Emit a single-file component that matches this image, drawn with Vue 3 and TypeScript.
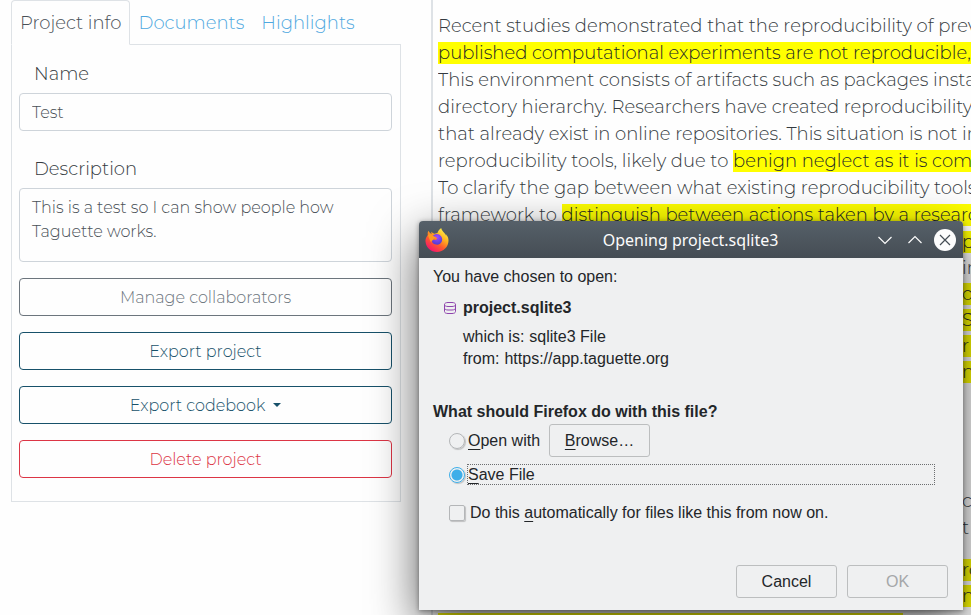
<script setup lang="ts">
interface DocLine { plain?: string; marked?: string }

const tabs = ['Project info', 'Documents', 'Highlights']

const intro: DocLine[] = [
  { plain: 'Recent studies demonstrated that the reproducibility of prev' },
  { marked: 'published computational experiments are not reproducible, l' },
  { plain: 'This environment consists of artifacts such as packages instal' },
  { plain: 'directory hierarchy. Researchers have created reproducibility' },
  { plain: 'that already exist in online repositories. This situation is not im' },
  { plain: 'reproducibility tools, likely due to ', marked: 'benign neglect as it is comm' },
  { plain: 'To clarify the gap between what existing reproducibility tools' },
  { plain: 'framework to ', marked: 'distinguish between actions taken by a researc' },
]

interface TailLine { text: string; marked: boolean }

const findings: TailLine[] = [
  { text: 'p', marked: true },
  { text: 'in', marked: false },
  { text: 'o', marked: true },
  { text: 'S', marked: true },
  { text: 'r i', marked: true },
  { text: 'n', marked: true },
]
const method: TailLine[] = [
  { text: 'c', marked: false },
  { text: 't', marked: false },
]
const results: TailLine[] = [
  { text: 'ro', marked: true },
  { text: 'ne', marked: true },
]
</script>

<template>
  <div class="page">
    <aside class="sidebar">
      <nav class="tabs">
        <a v-for="(tab, i) in tabs" :key="tab" href="#" class="tab" :class="{ active: i === 0 }">{{ tab }}</a>
      </nav>
      <form class="panel" @submit.prevent>
        <div class="group">
          <label for="project-name">Name</label>
          <input id="project-name" type="text" value="Test" />
        </div>
        <div class="group">
          <label for="project-description">Description</label>
          <textarea id="project-description" rows="2">This is a test so I can show people how Taguette works.</textarea>
        </div>
        <button type="button" class="btn secondary">Manage collaborators</button>
        <button type="button" class="btn primary">Export project</button>
        <button type="button" class="btn primary caret">Export codebook</button>
        <button type="button" class="btn danger">Delete project</button>
      </form>
    </aside>

    <main class="document">
      <p class="intro">
        <span v-for="(line, i) in intro" :key="i" class="line">{{ line.plain }}<mark v-if="line.marked">{{ line.marked }}</mark></span>
      </p>
      <p class="findings">
        <span v-for="(line, i) in findings" :key="i" class="line tail"><component :is="line.marked ? 'mark' : 'span'">{{ line.text }}</component></span>
      </p>
      <p class="method">
        <span v-for="(line, i) in method" :key="i" class="line tail"><component :is="line.marked ? 'mark' : 'span'">{{ line.text }}</component></span>
      </p>
      <p>
        <span v-for="(line, i) in results" :key="i" class="line tail"><component :is="line.marked ? 'mark' : 'span'">{{ line.text }}</component></span>
        <span class="line closing"><mark></mark></span>
      </p>
    </main>

    <section class="dialog" role="dialog" aria-labelledby="dialog-title">
      <header class="titlebar">
        <svg class="firefox" viewBox="0 0 24 24" aria-hidden="true">
          <defs>
            <linearGradient id="flame" x1="0.85" y1="0.05" x2="0.25" y2="0.95">
              <stop offset="0" stop-color="#fff44f" />
              <stop offset="0.35" stop-color="#ffb31f" />
              <stop offset="0.65" stop-color="#ff5a2c" />
              <stop offset="1" stop-color="#f5156c" />
            </linearGradient>
            <radialGradient id="globe" cx="0.5" cy="0.3" r="0.7">
              <stop offset="0" stop-color="#a24bff" />
              <stop offset="1" stop-color="#4f3ccf" />
            </radialGradient>
          </defs>
          <path fill="url(#flame)" d="M23 9.5c-.5-1.500-1.500-2.800-2.300-3.300.5 1 .7 1.700.7 2-1-2.600-3-3.700-4.300-5.900C16.500 1.400 16.200.800 16.200 0c-2.200 1.400-3.400 3.600-3.700 5.100-1 0-1.900.3-2.700.7C8.500 5.500 7 4.600 6.300 3.800c0 .8.100 1.600.4 2.200C5.500 5.500 4 4 3.400 2.700 2.800 3.700 2.400 5.600 2.800 7 1 9.200.3 11.500.5 13.500 1 19.400 5.800 24 12 24c6.400 0 11.500-5 11.500-11.400 0-1.100-.2-2.200-.5-3.100z" />
          <path fill="url(#globe)" d="M8 7.800c1.400-1.800 4.500-2.400 6.500-1 2.600 1.600 3.400 4.500 2.200 7-1.100 2.200-3.500 3.300-5.700 2.800-2.800-.6-4.400-2.600-4.300-4.400.9-.8 2-.7 3.100-.2 1 0 2.200-.9 2.400-1.800-.8-.4-2.400-.5-2.700-1.100z" />
          <path fill="#ff9a22" d="M2.800 7C4 6 6.500 6 7.800 7.700c.5.900 1.500.9 3.200 1-.2 1.300-1.600 1.600-2.300 2.100-.4.500-.2 1.100-.8 1.500-1.200.3-1.900.8-1.200 2.500C4.500 13 4.300 10 2.800 7z" />
        </svg>
        <h1 id="dialog-title">Opening project.sqlite3</h1>
        <div class="controls">
          <button type="button" aria-label="Minimize"><svg viewBox="0 0 22 22"><path d="M4.500 8l6.500 6.500L17.500 8" /></svg></button>
          <button type="button" aria-label="Maximize"><svg viewBox="0 0 22 22"><path d="M4.500 14L11 7.500l6.500 6.500" /></svg></button>
          <button type="button" class="close" aria-label="Close"><svg viewBox="0 0 22 22"><circle cx="11" cy="11" r="11" /><path d="M6 6l10 10M16 6L6 16" /></svg></button>
        </div>
      </header>
      <div class="body">
        <p>You have chosen to open:</p>
        <div class="file">
          <svg viewBox="0 0 12 12" aria-hidden="true"><path d="M.5 2.500C.5 1.200 2 .5 4 .5h4c2 0 3.500.7 3.500 2S10 4.500 8 4.500H4c-2 0-3.500-.7-3.500-2zv7c0 1.300 1.500 2 3.500 2h4c2 0 3.500-.7 3.500-2v-7M.5 6C.5 7.300 2 8 4 8h4c2 0 3.500-.7 3.500-2" /></svg>
          <strong>project.sqlite3</strong>
        </div>
        <dl>
          <div><dt>which is:</dt><dd>sqlite3 File</dd></div>
          <div><dt>from:</dt><dd>https://app.taguette.org</dd></div>
        </dl>
        <fieldset>
          <legend>What should Firefox do with this file?</legend>
          <div class="option open">
            <input id="open-with" type="radio" name="action" />
            <label for="open-with"><u>O</u>pen with</label>
            <button type="button" class="push"><span><u>B</u>rowse…</span></button>
          </div>
          <div class="option save">
            <input id="save-file" type="radio" name="action" checked />
            <label for="save-file"><u>S</u>ave File</label>
          </div>
          <div class="option always">
            <input id="always" type="checkbox" />
            <label for="always">Do this <u>a</u>utomatically for files like this from now on.</label>
          </div>
        </fieldset>
        <footer>
          <button type="button" class="push">Cancel</button>
          <button type="button" class="push" disabled>OK</button>
        </footer>
      </div>
    </section>
  </div>
</template>

<style>
body {
  overflow: hidden;
}
</style>

<style scoped>
* {
  box-sizing: border-box;
}

.page {
  position: relative;
  display: grid;
  grid-template-columns: minmax(0, 431fr) minmax(0, 540fr);
  height: 100vh;
  overflow: hidden;
  background: #fefefe;
  color: #343a40;
  font-family: Montserrat, Inter, sans-serif;
  font-size: 18px;
  font-weight: 300;
}

p,
h1,
dl,
dd {
  margin: 0;
}

.sidebar {
  padding: 0 30px 0 11px;
}

.tabs {
  display: flex;
  height: 45px;
  border-bottom: 1px solid #dee2e6;
}

.tab {
  height: 45px;
  padding: 10px 7px 10px 8px;
  border: 1px solid transparent;
  color: #4fa8e0;
  line-height: 25px;
  text-decoration: none;
  white-space: nowrap;
}

.tab.active {
  border-color: #dee2e6 #dee2e6 #fefefe;
  border-radius: 4px 4px 0 0;
  background: #fefefe;
  color: #495057;
}

.panel {
  display: flex;
  flex-direction: column;
  gap: 16px;
  padding: 17px 8px 23px 7px;
  border: 1px solid #dee2e6;
  border-top: 0;
}

.group {
  display: flex;
  flex-direction: column;
  gap: 6px;
}

.group + .group {
  padding-top: 10px;
}

.group label {
  padding-left: 15px;
  line-height: 25px;
}

.group input,
.group textarea {
  display: block;
  width: 100%;
  height: 38px;
  padding: 6px 12px;
  border: 1px solid #ced4da;
  border-radius: 4px;
  outline: 0;
  background: transparent;
  color: #495057;
  font: inherit;
  font-size: 16px;
  line-height: 24px;
  resize: none;
}

.group textarea {
  height: 74px;
  padding-top: 7px;
}

.btn {
  height: 38px;
  padding: 2px 12px 0;
  border: 1px solid;
  border-radius: 4px;
  background: transparent;
  font: inherit;
  font-size: 16px;
  line-height: 24px;
}

.secondary {
  color: #6c757d;
}

.primary {
  color: #17516a;
}

.danger {
  color: #dc3545;
}

.caret::after {
  display: inline-block;
  margin-left: 8px;
  border: 4px solid transparent;
  border-top-color: currentColor;
  border-bottom: 0;
  vertical-align: 4px;
  content: '';
}

.document {
  padding: 13px 0 0 5px;
  border-left: 2px solid #dee2e6;
  overflow: hidden;
}

.line {
  display: block;
  overflow: hidden;
  line-height: 27px;
  white-space: pre;
}

mark {
  background: #ff0;
  color: #212529;
}

.findings .line {
  line-height: 26px;
}

.findings {
  margin-bottom: 102px;
}

.method {
  margin-bottom: 16px;
}

.tail {
  display: flex;
  justify-content: flex-end;
}

.tail > * {
  width: 9px;
  height: 22px;
  margin: 2px 0;
  line-height: 22px;
}

.results .tail > * {
  margin-bottom: 3px;
}

.method .tail > * {
  margin: 3px 0 2px;
}

.closing mark {
  display: block;
  width: 465px;
  height: 22px;
  margin-top: 4px;
}

.dialog {
  position: absolute;
  top: 221px;
  right: 8px;
  width: 544px;
  border-radius: 4px 4px 0 0;
  background: #eff0f1;
  box-shadow: 0 16px 48px rgba(0, 0, 0, 0.65), 0 1px 5px rgba(0, 0, 0, 0.4);
  color: #232629;
  font-family: 'Liberation Sans', Arial, sans-serif;
  font-size: 16px;
  font-weight: 400;
  line-height: 20px;
}

.titlebar {
  display: grid;
  grid-template-columns: 82px 1fr 82px;
  align-items: center;
  height: 37px;
  padding: 0 7px 0 6px;
  border-radius: 4px 4px 0 0;
  background: linear-gradient(#566069, #454d54);
  color: #fcfcfc;
}

.firefox {
  width: 24px;
  height: 24px;
}

h1 {
  font-family: 'Noto Sans', sans-serif;
  font-size: 16px;
  font-weight: 400;
  text-align: center;
}

.controls {
  display: flex;
  gap: 8px;
}

.controls button {
  width: 22px;
  height: 22px;
  padding: 0;
  border: 0;
  background: transparent;
}

.controls svg {
  display: block;
  fill: none;
  stroke: #fcfcfc;
  stroke-width: 1.2;
}

.controls circle {
  fill: #fcfcfc;
  stroke: none;
}

.close path {
  stroke: #454d54;
}

.body {
  padding: 9px 15px 12px 14px;
}

.file {
  display: flex;
  align-items: center;
  gap: 7px;
  margin-top: 11px;
  padding-left: 11px;
}

.file svg {
  width: 12px;
  height: 12px;
  fill: none;
  stroke: #8e44ad;
}

dl {
  margin-top: 8px;
  padding-left: 30px;
  line-height: 22px;
}

dl div {
  display: flex;
  gap: 5px;
}

fieldset {
  margin: 32px 0 0;
  padding: 0;
  border: 0;
}

legend {
  padding: 0;
  font-weight: 700;
}

.option {
  display: flex;
  align-items: center;
  padding-left: 16px;
}

.option input {
  flex: none;
  width: 16px;
  height: 16px;
  margin: 0 3px 0 0;
  border: 1px solid #b4b6b8;
  border-radius: 50%;
  box-shadow: 1px 1px 1px rgba(0, 0, 0, 0.2);
  appearance: none;
}

.option input:checked {
  border-color: #3daee9;
  background: radial-gradient(circle, #3daee9 5px, transparent 6px);
}

.option input[type='checkbox'] {
  margin-right: 5px;
  border-radius: 2px;
}

u {
  text-underline-offset: 3px;
}

.push {
  width: 101px;
  height: 33px;
  padding: 0;
  border: 1px solid #bcbebf;
  border-radius: 3px;
  background: transparent;
  color: #232629;
  font: inherit;
}

.push:disabled {
  color: #a5a7a9;
}

.open {
  margin-top: 2px;
}

.open .push {
  margin-left: 9px;
}

.save {
  margin-top: 7px;
}

.save label {
  flex: 1;
  height: 21px;
  margin: 0 13px 0 -1px;
  border: 1px dotted #6c6e70;
}

.always {
  margin-top: 18px;
}

footer {
  display: flex;
  justify-content: flex-end;
  gap: 10px;
  margin-top: 42px;
}
</style>
